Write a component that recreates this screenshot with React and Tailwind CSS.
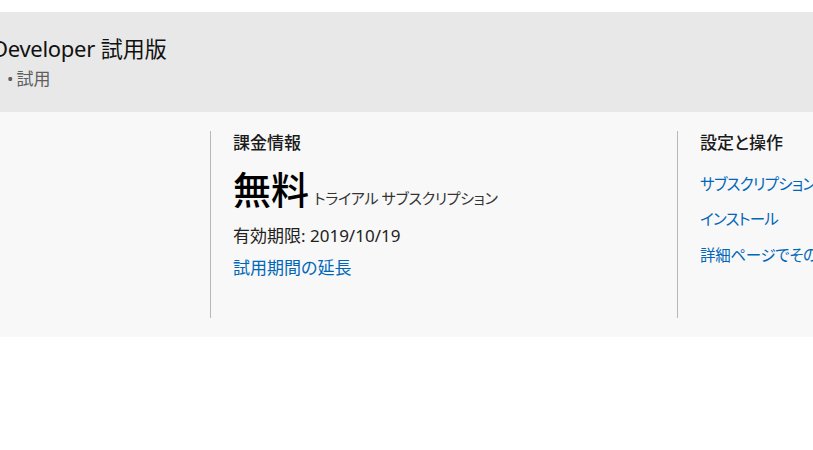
export default function App() {
  const font = { fontFamily: '"Noto Sans", "Noto Sans CJK JP", sans-serif' };
  return (
    <div className="w-[813px] h-[450px] bg-white overflow-hidden text-[#1a1a1a] [font-feature-settings:'palt']" style={font}>
      <div className="h-[12px]" />
      <div className="h-[100px] bg-[#e8e8e8] pt-[21px]">
        <div className="ml-[-8px] text-[22px] leading-[30px] text-[#111] whitespace-nowrap">
          <span className="tracking-[-0.3px]">Developer</span> 試用版
        </div>
        <div className="mt-[4px] ml-[7px] text-[17px] leading-[24px] text-[#5e5e5e]">
          <span className="mr-[3px]">•</span>試用
        </div>
      </div>
      <div className="h-[225px] bg-[#f8f8f8] pt-[19px] flex">
        <div className="w-[210px] shrink-0" />
        <div className="w-[467px] shrink-0 h-[187px] border-l border-[#b8b8b8] pl-[22px] pt-[1px]">
          <div className="text-[17px] leading-[22px] font-medium text-[#1a1a1a]">課金情報</div>
          <div className="flex items-baseline mt-[11px] h-[48px]">
            <span className="text-[38px] leading-[48px] font-medium text-black">無料</span>
            <span className="ml-[5px] text-[15px] leading-[20px] tracking-[-0.3px] text-[#333]">トライアル サブスクリプション</span>
          </div>
          <div className="mt-[11px] text-[17px] leading-[24px] text-[#222]">有効期限: 2019/10/19</div>
          <div className="mt-[8px] text-[17px] leading-[24px] text-[#0067b8]">試用期間の延長</div>
        </div>
        <div className="flex-1 h-[187px] border-l border-[#b8b8b8] pl-[22px] pt-[1px] whitespace-nowrap overflow-hidden">
          <div className="text-[17px] leading-[22px] font-medium text-[#1a1a1a]">設定と操作</div>
          <div className="mt-[19px] text-[15.5px] leading-[22px] tracking-[-0.8px] text-[#0067b8]">サブスクリプションの管理</div>
          <div className="mt-[13px] text-[15.5px] leading-[22px] tracking-[-0.8px] text-[#0067b8]">インストール</div>
          <div className="mt-[14px] text-[15.5px] leading-[22px] tracking-[-0.3px] text-[#0067b8]">詳細ページでその他の情報</div>
        </div>
      </div>
    </div>
  );
}
